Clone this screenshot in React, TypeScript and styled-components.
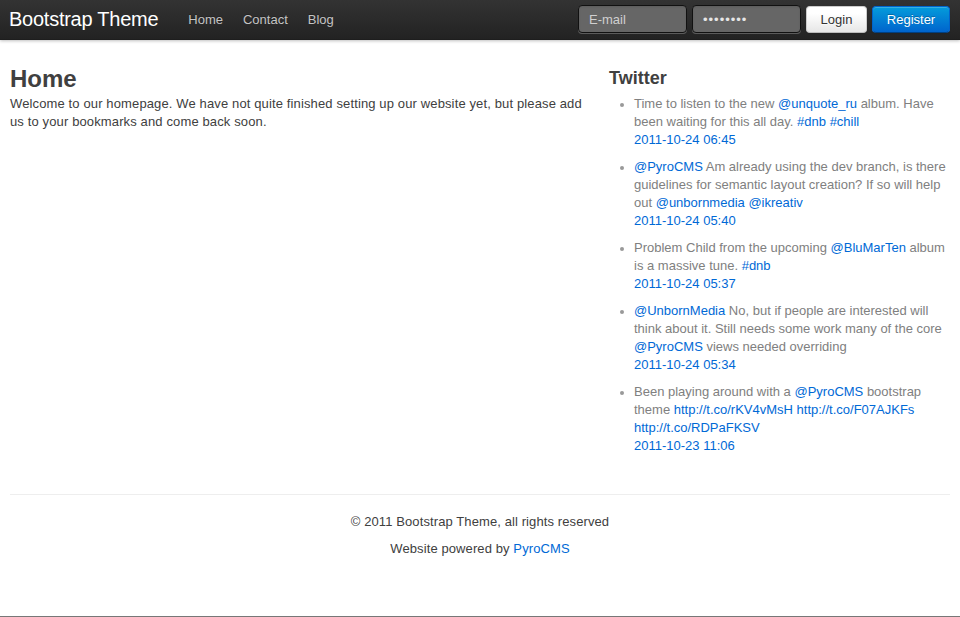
import React from "react";
import styled, { createGlobalStyle } from "styled-components";

const GlobalStyle = createGlobalStyle`
  html, body { margin: 0; padding: 0; }
  body {
    font-family: "Liberation Sans", Helvetica, Arial, sans-serif;
    font-size: 13px;
    line-height: 18px;
    color: #404040;
    background: #fff;
  }
  * { box-sizing: border-box; }
`;

const Page = styled.div`
  min-height: 617px;
  border-bottom: 1px solid #777;
  display: flex;
  flex-direction: column;
`;

const Topbar = styled.header`
  height: 40px;
  background-color: #222;
  background-image: linear-gradient(to bottom, #333, #222);
  box-shadow: 0 1px 3px rgba(0, 0, 0, 0.25), inset 0 -1px 0 rgba(0, 0, 0, 0.1);
  position: relative;
  z-index: 2;
`;

const Container = styled.div`
  width: 940px;
  margin: 0 auto;
`;

const TopbarInner = styled(Container)`
  display: flex;
  align-items: flex-start;
  height: 40px;
`;

const Brand = styled.a`
  display: block;
  padding: 9px 20px 11px 0;
  margin-left: -1px;
  font-size: 20px;
  line-height: 20px;
  letter-spacing: -0.25px;
  color: #fff;
  text-decoration: none;
`;

const Nav = styled.ul`
  display: flex;
  list-style: none;
  margin: 0;
  padding: 0;
`;

const NavLink = styled.a`
  display: block;
  padding: 10px 10px 11px;
  line-height: 19px;
  color: #c4c4c4;
  text-decoration: none;
  text-shadow: 0 -1px 0 rgba(0, 0, 0, 0.25);
`;

const LoginForm = styled.form`
  margin: 5px 0 0 auto;
  display: flex;
  gap: 5px;
`;

const TopInput = styled.input`
  width: 109px;
  height: 28px;
  padding: 4px 10px;
  font-family: inherit;
  font-size: 13px;
  line-height: 18px;
  color: rgba(255, 255, 255, 0.75);
  background-color: #666;
  border: 1px solid #111;
  border-radius: 4px;
  box-shadow: inset 0 1px 2px rgba(0, 0, 0, 0.1), 0 1px 0 rgba(255, 255, 255, 0.25);
  outline: none;
  &::placeholder { color: #d0d0d0; }
  &[type="password"] { letter-spacing: 1px; color: #e6e6e6; }
`;

const Button = styled.button<{ $primary?: boolean; $width: number }>`
  width: ${(p) => p.$width}px;
  margin-top: 1px;
  height: 27px;
  padding: 0;
  font-family: inherit;
  font-size: 13px;
  line-height: 18px;
  border-radius: 4px;
  cursor: pointer;
  color: ${(p) => (p.$primary ? "#fff" : "#333")};
  border: 1px solid ${(p) => (p.$primary ? "#0064cd" : "#ccc")};
  border-bottom-color: ${(p) => (p.$primary ? "#003f81" : "#bbb")};
  text-shadow: ${(p) => (p.$primary ? "0 -1px 0 rgba(0,0,0,0.25)" : "0 1px 1px rgba(255,255,255,0.75)")};
  background-image: ${(p) =>
    p.$primary
      ? "linear-gradient(to bottom, #049cdb, #0064cd)"
      : "linear-gradient(to bottom, #fff, #fff 25%, #e6e6e6)"};
  box-shadow: inset 0 1px 0 rgba(255, 255, 255, 0.2), 0 1px 2px rgba(0, 0, 0, 0.05);
`;

const Main = styled(Container)`
  padding-top: 23px;
  display: grid;
  grid-template-columns: 580px 340px;
  column-gap: 20px;
  align-items: start;
`;

const H1 = styled.h1`
  margin: 0;
  font-size: 24px;
  line-height: 32px;
  font-weight: bold;
  color: #404040;
`;

const Text = styled.p`
  margin: 0;
  letter-spacing: 0.13px;
`;

const H3 = styled.h3`
  margin: 2px 0 3px -1px;
  font-size: 18px;
  line-height: 27px;
  font-weight: bold;
  color: #404040;
`;

const TweetList = styled.ul`
  margin: 0 0 0 24px;
  padding: 0;
  color: #808080;
`;

const Tweet = styled.li`
  margin-bottom: 9px;
  &::marker { color: #999; font-size: 12px; }
`;

const Link = styled.a`
  color: #0069d6;
  text-decoration: none;
`;

const Date = styled(Link)`
  display: block;
`;

const Footer = styled.footer`
  margin-top: 30px;
  padding-top: 18px;
  border-top: 1px solid #eee;
  text-align: center;
`;

const FooterText = styled.p`
  margin: 0 0 9px;
  letter-spacing: 0.1px;
`;

type Part = string | { link: string };

const tweets: { parts: Part[]; date: string }[] = [
  {
    parts: ["Time to listen to the new ", { link: "@unquote_ru" }, " album. Have been waiting for this all day. ", { link: "#dnb" }, " ", { link: "#chill" }],
    date: "2011-10-24 06:45",
  },
  {
    parts: [{ link: "@PyroCMS" }, " Am already using the dev branch, is there guidelines for semantic layout creation? If so will help out ", { link: "@unbornmedia" }, " ", { link: "@ikreativ" }],
    date: "2011-10-24 05:40",
  },
  {
    parts: ["Problem Child from the upcoming ", { link: "@BluMarTen" }, " album is a massive tune. ", { link: "#dnb" }],
    date: "2011-10-24 05:37",
  },
  {
    parts: [{ link: "@UnbornMedia" }, " No, but if people are interested will think about it. Still needs some work many of the core ", { link: "@PyroCMS" }, " views needed overriding"],
    date: "2011-10-24 05:34",
  },
  {
    parts: ["Been playing around with a ", { link: "@PyroCMS" }, " bootstrap theme ", { link: "http://t.co/rKV4vMsH" }, " ", { link: "http://t.co/F07AJKFs" }, " ", { link: "http://t.co/RDPaFKSV" }],
    date: "2011-10-23 11:06",
  },
];

export default function App() {
  return (
    <>
      <GlobalStyle />
      <Page>
        <Topbar>
          <TopbarInner>
            <Brand href="#">Bootstrap Theme</Brand>
            <Nav>
              <li><NavLink href="#">Home</NavLink></li>
              <li><NavLink href="#">Contact</NavLink></li>
              <li><NavLink href="#">Blog</NavLink></li>
            </Nav>
            <LoginForm onSubmit={(e) => e.preventDefault()}>
              <TopInput type="text" placeholder="E-mail" />
              <TopInput type="password" defaultValue="password" readOnly />
              <Button type="button" $width={61}>Login</Button>
              <Button type="button" $primary $width={78}>Register</Button>
            </LoginForm>
          </TopbarInner>
        </Topbar>
        <Main>
          <section>
            <H1>Home</H1>
            <Text>
              Welcome to our homepage. We have not quite finished setting up our website yet, but please add us to your bookmarks and come back soon.
            </Text>
          </section>
          <aside>
            <H3>Twitter</H3>
            <TweetList>
              {tweets.map((t, i) => (
                <Tweet key={i}>
                  {t.parts.map((p, j) =>
                    typeof p === "string" ? <React.Fragment key={j}>{p}</React.Fragment> : <Link key={j} href="#">{p.link}</Link>
                  )}
                  <Date href="#">{t.date}</Date>
                </Tweet>
              ))}
            </TweetList>
          </aside>
        </Main>
        <Container>
          <Footer>
            <FooterText>© 2011 Bootstrap Theme, all rights reserved</FooterText>
            <FooterText>Website powered by <Link href="#">PyroCMS</Link></FooterText>
          </Footer>
        </Container>
      </Page>
    </>
  );
}
